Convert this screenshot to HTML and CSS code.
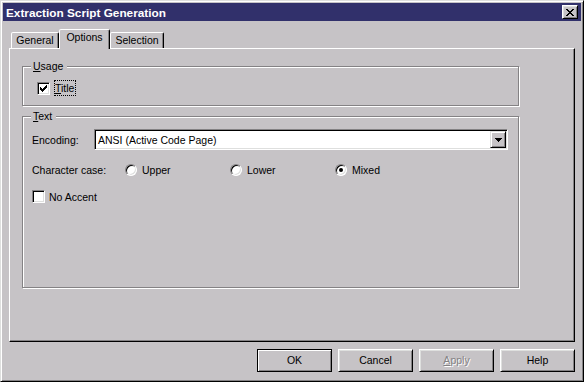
FILE: index.html
```html
<!DOCTYPE html>
<html lang="en">
<head>
    <meta charset="UTF-8">
    <meta name="viewport" content="width=device-width, initial-scale=1.0">
    <title>Extraction Script Generation</title>
    <link rel="stylesheet" href="styles.css">
</head>
<body>
    <div class="window">
        <div class="titlebar">
            <span class="title">Extraction Script Generation</span>
            <span class="close-btn">
                <svg width="8" height="7" viewBox="0 0 8 7" shape-rendering="crispEdges">
                    <path d="M0 0h2v1h-2zM6 0h2v1h-2zM1 1h2v1h-2zM5 1h2v1h-2zM2 2h4v1h-4zM3 3h2v1h-2zM2 4h4v1h-4zM1 5h2v1h-2zM5 5h2v1h-2zM0 6h2v1h-2zM6 6h2v1h-2z" fill="#000"/>
                </svg>
            </span>
        </div>
        <div class="content">
            <div class="tabs">
                <div class="tab tab-general">General</div>
                <div class="tab tab-options active">Options</div>
                <div class="tab tab-selection">Selection</div>
            </div>
            <div class="panel">
                <div class="group usage-group">
                    <span class="legend"><u>U</u>sage</span>
                    <div class="row usage-row">
                        <span class="checkbox">
                            <svg width="7" height="7" viewBox="0 0 7 7" shape-rendering="crispEdges">
                                <path d="M6 0h1v1h-1zM5 1h2v1h-2zM0 2h1v1h-1zM4 2h3v1h-3zM0 3h2v1h-2zM3 3h3v1h-3zM0 4h5v1h-5zM1 5h3v1h-3zM2 6h1v1h-1z" fill="#000"/>
                            </svg>
                        </span>
                        <span class="focus"><u>T</u>itle</span>
                    </div>
                </div>
                <div class="group text-group">
                    <span class="legend"><u>T</u>ext</span>
                    <div class="row encoding-row">
                        <span class="enc-label">Encoding:</span>
                        <div class="combo">
                            <span class="combo-text">ANSI (Active Code Page)</span>
                            <span class="combo-btn">
                                <svg width="7" height="4" viewBox="0 0 7 4" shape-rendering="crispEdges">
                                    <path d="M0 0h7v1h-7zM1 1h5v1h-5zM2 2h3v1h-3zM3 3h1v1h-1z" fill="#000"/>
                                </svg>
                            </span>
                        </div>
                    </div>
                    <div class="row case-row">
                        <span class="case-label">Character case:</span>
                        <span class="option"><span class="radio"></span>Upper</span>
                        <span class="option"><span class="radio"></span>Lower</span>
                        <span class="option"><span class="radio checked"></span>Mixed</span>
                    </div>
                    <div class="row accent-row">
                        <span class="checkbox"></span>
                        <span>No Accent</span>
                    </div>
                </div>
            </div>
            <div class="buttons">
                <span class="btn default">OK</span>
                <span class="btn">Cancel</span>
                <span class="btn disabled"><u>A</u>pply</span>
                <span class="btn">Help</span>
            </div>
        </div>
    </div>
</body>
</html>
```

FILE: styles.css
```css
body {
    margin: 0;
    font-family: "Liberation Sans", Arial, sans-serif;
    font-size: 10.5px;
    color: #000;
    background-color: #c6c3c6;
}
.window {
    box-sizing: border-box;
    width: 584px;
    height: 382px;
    padding: 2px;
    background-color: #c6c3c6;
    border: 1px solid;
    border-color: #dedfde #000 #000 #dedfde;
    box-shadow: inset 1px 1px #fff, inset -1px -1px #848284;
}
.titlebar {
    display: flex;
    align-items: center;
    justify-content: space-between;
    height: 18px;
    padding-left: 3px;
    background-color: #31306b;
}
.title {
    color: white;
    font-weight: bold;
    font-size: 11.8px;
    line-height: 16px;
    padding-top: 2px;
}
.close-btn {
    box-sizing: border-box;
    display: flex;
    align-items: center;
    justify-content: center;
    width: 16px;
    height: 14px;
    margin-right: 3px;
    background-color: #c6c3c6;
    border: 1px solid;
    border-color: #fff #000 #000 #fff;
    box-shadow: inset 1px 1px #dedfde, inset -1px -1px #848284;
}
.close-btn svg {
    margin-top: 1px;
}
.content {
    padding: 8px 6px 0;
}

/* tabs */
.tabs {
    display: flex;
    align-items: flex-end;
    height: 19px;
    padding-left: 2px;
    position: relative;
    z-index: 1;
}
.tab {
    box-sizing: border-box;
    height: 16px;
    border: 1px solid;
    border-bottom: none;
    border-color: #fff #000 transparent #fff;
    border-radius: 2px 2px 0 0;
    box-shadow: inset -1px 0 #848284;
    background-color: #c6c3c6;
    text-align: center;
    line-height: 14px;
}
.tab-general { width: 48px; }
.tab-options { width: 51px; }
.tab-selection { width: 54px; }
.tab.active {
    height: 20px;
    margin-bottom: -1px;
    line-height: 14px;
}
.panel {
    box-sizing: border-box;
    height: 294px;
    padding: 17px 0 0 12px;
    border: 1px solid;
    border-color: #fff #000 #000 #fff;
    box-shadow: inset -1px -1px #848284;
}

/* group boxes */
.group {
    box-sizing: border-box;
    display: flex;
    flex-direction: column;
    align-items: flex-start;
    width: 497px;
    padding-left: 8px;
    border: 1px solid #848284;
    box-shadow: 1px 1px #fff, inset 1px 1px #fff;
}
.usage-group {
    height: 40px;
}
.text-group {
    height: 172px;
    margin-top: 10px;
}
.legend {
    margin-top: -7px;
    padding: 0 4px 0 2px;
    line-height: 13px;
    background-color: #c6c3c6;
}
.row {
    display: flex;
    align-items: center;
}
.usage-row {
    margin: 7px 0 0 6px;
}
.focus {
    margin-left: 4px;
    padding: 0 1px 0 0;
    line-height: 14px;
    border: 1px dotted #000;
}
.encoding-row {
    margin: 6px 0 0 1px;
}
.enc-label {
    width: 62px;
}
.case-row {
    margin: 13px 0 0 1px;
    line-height: 14px;
}
.case-label {
    width: 93px;
}
.option {
    display: flex;
    align-items: center;
    width: 105px;
}
.accent-row {
    margin: 13px 0 0 1px;
}
.accent-row .checkbox {
    margin-right: 4px;
}

/* controls */
.checkbox {
    box-sizing: border-box;
    display: flex;
    align-items: center;
    justify-content: center;
    width: 13px;
    height: 13px;
    background-color: #fff;
    border: 1px solid;
    border-color: #848284 #fff #fff #848284;
    box-shadow: inset 1px 1px #000, inset -1px -1px #dedfde;
}
.radio {
    box-sizing: border-box;
    display: flex;
    align-items: center;
    justify-content: center;
    width: 12px;
    height: 12px;
    margin-right: 5px;
    border-radius: 50%;
    background-color: #fff;
    border: 1px solid;
    border-color: #848284 #fff #fff #848284;
    box-shadow: inset 1px 1px #000, inset -1px -1px #dedfde;
}
.radio.checked::after {
    content: "";
    width: 4px;
    height: 4px;
    border-radius: 50%;
    background-color: #000;
}
.combo {
    box-sizing: border-box;
    display: flex;
    align-items: center;
    width: 414px;
    height: 21px;
    padding: 1px;
    background-color: #fff;
    border: 1px solid;
    border-color: #848284 #fff #fff #848284;
    box-shadow: inset 1px 1px #000, inset -1px -1px #dedfde;
}
.combo-text {
    flex: 1;
    padding-left: 2px;
}
.combo-btn {
    box-sizing: border-box;
    display: flex;
    align-items: center;
    justify-content: center;
    width: 16px;
    height: 17px;
    background-color: #c6c3c6;
    border: 1px solid;
    border-color: #dedfde #000 #000 #dedfde;
    box-shadow: inset 1px 1px #fff, inset -1px -1px #848284;
}

/* buttons */
.buttons {
    display: flex;
    justify-content: flex-end;
    gap: 6px;
    margin-top: 7px;
}
.btn {
    box-sizing: border-box;
    width: 75px;
    height: 23px;
    line-height: 21px;
    text-align: center;
    border: 1px solid;
    border-color: #fff #000 #000 #fff;
    box-shadow: inset 1px 1px #dedfde, inset -1px -1px #848284;
}
.btn.default {
    border-color: #000;
    box-shadow: inset 1px 1px #fff, inset -1px -1px #848284;
}
.btn.disabled {
    color: #848284;
    text-shadow: 1px 1px 0 #fff;
}
```
